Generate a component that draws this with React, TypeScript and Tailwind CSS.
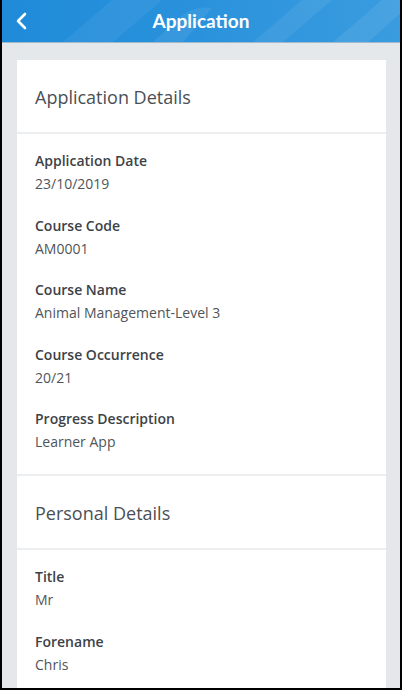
const SECTIONS = [
  {
    title: "Application Details",
    items: [
      { label: "Application Date", value: "23/10/2019" },
      { label: "Course Code", value: "AM0001" },
      { label: "Course Name", value: "Animal Management-Level 3" },
      { label: "Course Occurrence", value: "20/21" },
      { label: "Progress Description", value: "Learner App" },
    ],
  },
  {
    title: "Personal Details",
    items: [
      { label: "Title", value: "Mr" },
      { label: "Forename", value: "Chris" },
    ],
  },
];

function Header() {
  return (
    <div className="relative h-[43px] shrink-0 overflow-hidden bg-gradient-to-r from-[#1f8bd9] via-[#2a92dc] to-[#3a9cdf] border-b border-[#9fb9cc]">
      {/* soft diagonal streaks from the app's header artwork */}
      <svg className="absolute inset-0" width="402" height="43" viewBox="0 0 402 43">
        <path d="M60 43 L110 0 L160 0 L110 43 Z" fill="#ffffff" opacity="0.06" />
        <path d="M150 43 L175 20 Q190 5 210 8 L180 43 Z" fill="#ffffff" opacity="0.07" />
        <path d="M250 43 L300 0 L330 0 L280 43 Z" fill="#ffffff" opacity="0.07" />
        <path d="M330 43 L380 0 L402 0 L402 10 L365 43 Z" fill="#ffffff" opacity="0.08" />
      </svg>
      <div className="relative flex h-full items-center">
        <svg className="ml-[13px]" width="14" height="18" viewBox="0 0 14 18">
          <path d="M10 2 L3 9 L10 16" fill="none" stroke="#ffffff" strokeWidth="2.6" strokeLinecap="round" strokeLinejoin="round" />
        </svg>
        <div className="absolute inset-0 flex items-center justify-center">
          <span className="font-['Lato',sans-serif] text-[19px] font-bold text-white">Application</span>
        </div>
      </div>
    </div>
  );
}

export default function App() {
  return (
    <div className="flex h-[690px] w-[402px] flex-col overflow-hidden border-x-2 border-b-2 border-black bg-[#e4e8eb] font-['Open_Sans',sans-serif]">
      <Header />
      <div className="flex-1 overflow-hidden pl-[15px] pr-[14px] pt-[17px]">
        <div className="bg-white">
          {SECTIONS.map((section, i) => (
            <div key={section.title}>
              {i > 0 && <div className="h-[2px] bg-[#eceef0]" />}
              <div className="flex h-[72px] items-center px-[18px] pt-[2px]">
                <span className="text-[18px] text-[#4a4f55]">{section.title}</span>
              </div>
              <div className="h-[2px] bg-[#eceef0]" />
              <div className="flex flex-col gap-[18.5px] px-[18px] pb-5 pt-4">
                {section.items.map((item) => (
                  <div key={item.label}>
                    <div className="text-[14px] font-semibold leading-[22px] text-[#3d4247]">{item.label}</div>
                    <div className="text-[14px] leading-[24px] text-[#50555a]">{item.value}</div>
                  </div>
                ))}
              </div>
            </div>
          ))}
        </div>
      </div>
    </div>
  );
}
